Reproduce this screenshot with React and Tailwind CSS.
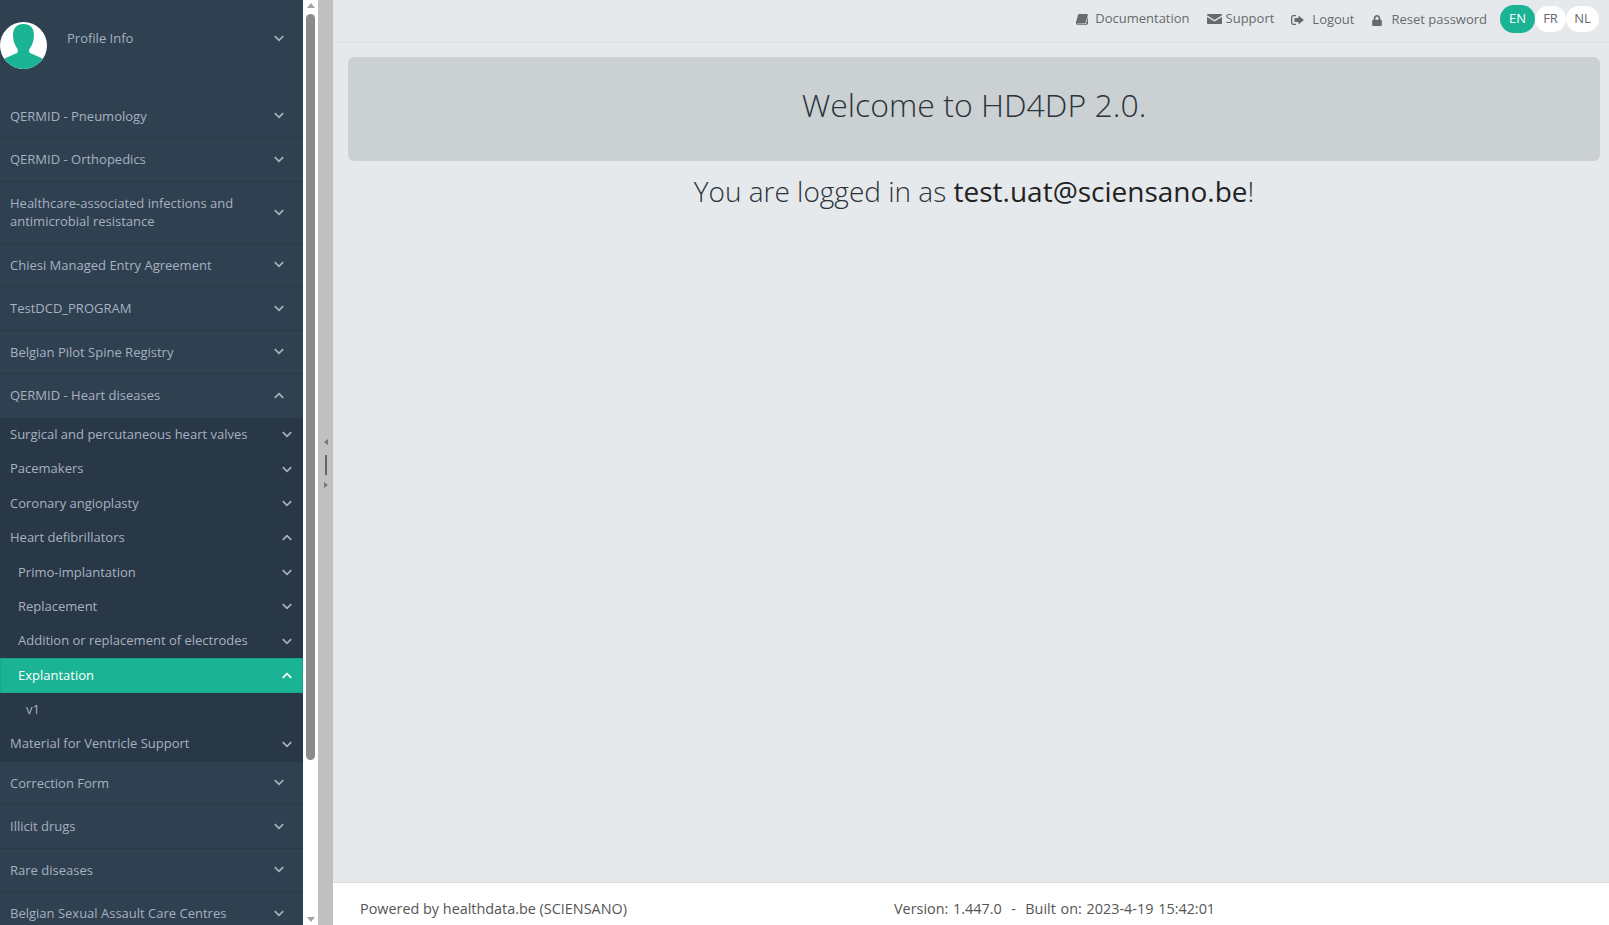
import React from 'react';
import { FaLock } from 'react-icons/fa';

const TOP_BEFORE = [
  { label: 'QERMID - Pneumology' },
  { label: 'QERMID - Orthopedics' },
  { label: 'Healthcare-associated infections and antimicrobial resistance', tall: true },
  { label: 'Chiesi Managed Entry Agreement' },
  { label: 'TestDCD_PROGRAM' },
  { label: 'Belgian Pilot Spine Registry' },
];

const TOP_AFTER = ['Correction Form', 'Illicit drugs', 'Rare diseases', 'Belgian Sexual Assault Care Centres'];

function Chevron({ up = false, className = 'text-[#a7b1c2]' }) {
  return (
    <svg viewBox="0 0 10 7" className={`h-[7px] w-[10px] shrink-0 ${className}`} fill="none" stroke="currentColor" strokeWidth="1.7">
      <path d={up ? 'M.8 5.800 5 1.600l4.200 4.200' : 'M.8 1.200 5 5.400l4.200-4.200'} />
    </svg>
  );
}

function MainRow({ label, tall }) {
  return (
    <div className={`flex items-center justify-between border-b border-[#293846] pl-[10px] pr-[19px] ${tall ? 'h-[62px]' : 'h-[43.5px]'}`}>
      <span className="w-[240px] leading-[18px]">{label}</span>
      <Chevron />
    </div>
  );
}

function SubRow({ label, indent = 'pl-[10px]', height = 'h-[34.43px]', up = false, noChevron = false }) {
  return (
    <div className={`flex items-center justify-between pr-[11px] ${height} ${indent}`}>
      <span>{label}</span>
      {!noChevron && <Chevron up={up} />}
    </div>
  );
}

function ActiveRow({ label }) {
  return (
    <div className="flex h-[34.43px] items-center justify-between border border-[#18a689] bg-[#1ab394] pl-[17px] pr-[10px] text-white">
      <span>{label}</span>
      <Chevron up className="text-white" />
    </div>
  );
}

function Avatar() {
  return (
    <svg viewBox="0 0 47 47" className="h-[47px] w-[47px] shrink-0">
      <defs>
        <clipPath id="avatar-clip"><circle cx="23.5" cy="23.5" r="23.5" /></clipPath>
      </defs>
      <circle cx="23.5" cy="23.5" r="23.5" fill="#fff" />
      <g clipPath="url(#avatar-clip)" fill="#1ab394">
        <path d="M23.5 2c-7 0-10.500 4.500-10.500 11 0 5 1.500 10 4.500 14 .8 1.200.6 3-.5 4L0 38.500V47h47v-8.500L30 31c-1.100-1-1.300-2.800-.5-4 3-4 4.500-9 4.500-14 0-6.500-3.500-11-10.500-11z" />
      </g>
    </svg>
  );
}

function BookIcon() {
  return (
    <svg viewBox="0 0 12 11" className="h-[11px] w-[12px] shrink-0" fill="currentColor">
      <path d="M3.200 0H11c.6 0 1 .4.800 1L9.600 8.600c-.2.600-.6.900-1.200.9H1.800c-.5 0-.7.300-.6.500.1.200.3.300.7.300h7.200c.4 0 .7-.2.900-.6L12 2.500V9.300c-.2.900-.9 1.700-1.900 1.700H1.800C.7 11 0 10.100 0 9c0-.3 0-.6.100-.9L2 1C2.200.4 2.600 0 3.200 0z" />
    </svg>
  );
}

function EnvelopeIcon() {
  return (
    <svg viewBox="0 0 15 10" className="h-[10px] w-[15px] shrink-0" fill="currentColor">
      <path d="M.8 0h13.400c.5 0 .8.300.8.800v.5L7.500 6 0 1.300V.8C0 .3.300 0 .8 0z" />
      <path d="M0 3l7.500 4.600L15 3v6.200c0 .5-.3.800-.8.800H.8c-.5 0-.8-.3-.8-.8z" />
    </svg>
  );
}

function SignOutIcon() {
  return (
    <svg viewBox="0 0 13 10" className="h-[10px] w-[13px] shrink-0" fill="currentColor">
      <path d="M2.500 0H5v1.300H2.500c-.7 0-1.200.5-1.200 1.200v5c0 .7.500 1.200 1.200 1.200H5V10H2.500C1.100 10 0 8.900 0 7.500v-5C0 1.100 1.100 0 2.500 0z" />
      <path d="M7.500.5L13 5 7.500 9.500V7H3.500V3h4z" />
    </svg>
  );
}

function Sidebar() {
  return (
    <aside className="h-full w-[303px] shrink-0 overflow-hidden bg-[#2f4050] text-[13px] text-[#a7b1c2]">
      <div className="flex h-[94.5px] items-start pr-[19px] pt-[22px]">
        <Avatar />
        <span className="ml-[20px] mt-[7px] flex-1">Profile Info</span>
        <Chevron className="mt-[13px] text-[#a7b1c2]" />
      </div>
      {TOP_BEFORE.map((row) => (
        <MainRow key={row.label} label={row.label} tall={row.tall} />
      ))}
      <div className="flex h-[43.5px] items-center justify-between pl-[10px] pr-[19px]">
        <span>QERMID - Heart diseases</span>
        <Chevron up />
      </div>
      <div className="border-b border-[#293846] bg-[#293846]">
        <SubRow label="Surgical and percutaneous heart valves" />
        <SubRow label="Pacemakers" />
        <SubRow label="Coronary angioplasty" />
        <SubRow label="Heart defibrillators" up />
        <SubRow label="Primo-implantation" indent="pl-[18px]" />
        <SubRow label="Replacement" indent="pl-[18px]" />
        <SubRow label="Addition or replacement of electrodes" indent="pl-[18px]" />
        <ActiveRow label="Explantation" />
        <SubRow label="v1" indent="pl-[26px]" noChevron />
        <SubRow label="Material for Ventricle Support" height="h-[33.43px]" />
      </div>
      {TOP_AFTER.map((label) => (
        <MainRow key={label} label={label} />
      ))}
    </aside>
  );
}

function Scrollbar() {
  return (
    <div className="flex h-full w-[15px] shrink-0 flex-col items-center bg-white">
      <div className="mt-[3px] h-0 w-0 border-x-[4px] border-b-[5px] border-x-transparent border-b-[#a3a3a3]" />
      <div className="mt-[6px] h-[746px] w-[9px] rounded-full bg-[#8b8b8b]" />
      <div className="mb-[3px] mt-auto h-0 w-0 border-x-[4px] border-t-[5px] border-x-transparent border-t-[#a3a3a3]" />
    </div>
  );
}

function Splitter() {
  return (
    <div className="flex h-full w-[15px] shrink-0 flex-col items-center bg-[#c0c0c0] pt-[439px]">
      <div className="h-0 w-0 border-y-[3px] border-r-[4px] border-y-transparent border-r-[#777]" />
      <div className="mt-[10px] h-[20px] w-[2px] bg-[#666]" />
      <div className="mt-[7px] h-0 w-0 border-y-[3px] border-l-[4px] border-y-transparent border-l-[#777]" />
    </div>
  );
}

function Header() {
  return (
    <header className="flex h-[43px] shrink-0 items-center justify-end border-b border-[#dcdfe2] pb-[8px] pr-[10px] pt-[4px] text-[#676a6c]">
      <span className="flex items-center gap-[7px]"><BookIcon />Documentation</span>
      <span className="ml-[17px] flex items-center gap-[4px]"><EnvelopeIcon />Support</span>
      <span className="ml-[17px] flex translate-y-[1px] items-center gap-[8px]"><SignOutIcon />Logout</span>
      <span className="ml-[18px] flex translate-y-[1px] items-center gap-[9px]"><FaLock className="h-[11px] w-[10px]" />Reset password</span>
      <div className="ml-[13px] flex items-center">
        <span className="flex h-[28px] w-[35px] items-center justify-center rounded-full bg-[#1ab394] text-white">EN</span>
        <span className="flex h-[26px] w-[31px] items-center justify-center rounded-full bg-white">FR</span>
        <span className="flex h-[26px] w-[33px] items-center justify-center rounded-full bg-white">NL</span>
      </div>
    </header>
  );
}

export default function App() {
  return (
    <div className="flex h-screen overflow-hidden font-['Open_Sans',sans-serif] text-[13px]">
      <Sidebar />
      <Scrollbar />
      <Splitter />
      <main className="flex min-w-0 flex-1 flex-col bg-[#e5e9ec]">
        <Header />
        <section className="flex-1 pl-[15px] pr-[9px] pt-[14px]">
          <div className="flex h-[104px] items-center justify-center rounded-[6px] bg-[#cbd0d3] pb-[8px] text-[32px] font-light text-[#2b333b]">
            Welcome to HD4DP 2.0.
          </div>
          <p className="mt-[9px] text-center text-[28px] font-light text-[#2b333b]">
            You are logged in as <span className="font-normal text-[#222]">test.uat@sciensano.be</span>!
          </p>
        </section>
        <footer className="flex h-[43px] shrink-0 items-center border-t border-[#dcdfe2] bg-white pl-[27px] pt-[10px] text-[14.4px] text-[#555]">
          <span className="w-[534px]">Powered by healthdata.be (SCIENSANO)</span>
          <span className="whitespace-pre [word-spacing:1px]">Version: 1.447.0  -  Built on: 2023-4-19 15:42:01</span>
        </footer>
      </main>
    </div>
  );
}
